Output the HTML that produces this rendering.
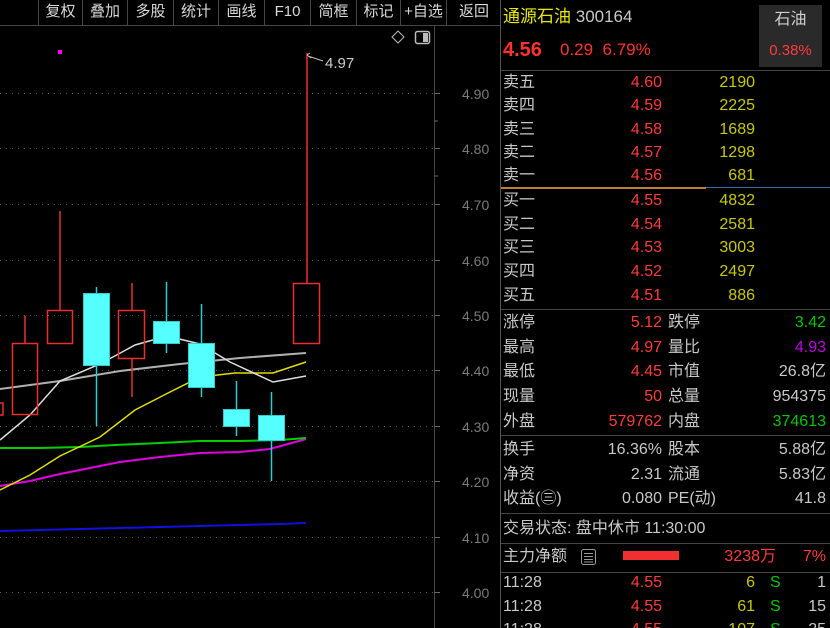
<!DOCTYPE html>
<html style="overflow:hidden;width:830px;height:628px"><head><meta charset="utf-8"><style>
html,body{overflow:hidden;}
body{margin:0;width:830px;height:628px;background:#000;overflow:hidden;position:relative;font-family:"Liberation Sans","Noto Sans CJK SC",sans-serif;}
.a{position:absolute;white-space:nowrap;line-height:20px;}
.tb{position:absolute;top:0;height:25px;line-height:24px;font-size:15px;color:#d8d8d8;text-align:center;border-left:1px solid #444;}
.l{color:#c8c8c8;font-size:16px;}
.r{color:#ff3a3a;font-size:16px;text-align:right;}
.y{color:#c8c800;font-size:16px;text-align:right;}
.w{color:#c8c8c8;font-size:16px;text-align:right;}
.g{color:#00c800;font-size:16px;text-align:right;}
.hl{position:absolute;left:501px;width:329px;height:1px;background:#444;}
.ax{position:absolute;left:462px;color:#7a7a7a;font-size:14px;line-height:16px;}
</style></head><body>
<div class="tb" style="left:38px;width:43px">复权</div>
<div class="tb" style="left:82px;width:44px">叠加</div>
<div class="tb" style="left:127px;width:45px">多股</div>
<div class="tb" style="left:173px;width:44px">统计</div>
<div class="tb" style="left:218px;width:45px">画线</div>
<div class="tb" style="left:264px;width:45px">F10</div>
<div class="tb" style="left:310px;width:45px">简框</div>
<div class="tb" style="left:356px;width:43px">标记</div>
<div class="tb" style="left:400px;width:45px">+自选</div>
<div class="tb" style="left:446px;width:54px">返回</div>
<div style="position:absolute;left:0;top:25px;width:500px;height:1px;background:#444"></div>
<svg style="position:absolute;left:0;top:0" width="500" height="628">
<g stroke="#555" stroke-dasharray="1,5" stroke-width="1">
<line x1="0" y1="93.5" x2="434" y2="93.5"/><line x1="0" y1="148.5" x2="434" y2="148.5"/><line x1="0" y1="204.5" x2="434" y2="204.5"/><line x1="0" y1="260.5" x2="434" y2="260.5"/><line x1="0" y1="315.5" x2="434" y2="315.5"/><line x1="0" y1="370.5" x2="434" y2="370.5"/><line x1="0" y1="426.5" x2="434" y2="426.5"/><line x1="0" y1="481.5" x2="434" y2="481.5"/><line x1="0" y1="537.5" x2="434" y2="537.5"/><line x1="0" y1="592.5" x2="434" y2="592.5"/>
</g>
<line x1="434.5" y1="26" x2="434.5" y2="628" stroke="#444"/>
<g stroke="#666"><line x1="434" y1="93.5" x2="440" y2="93.5"/><line x1="434" y1="121" x2="438" y2="121"/><line x1="434" y1="148.5" x2="440" y2="148.5"/><line x1="434" y1="176" x2="438" y2="176"/><line x1="434" y1="204.5" x2="440" y2="204.5"/><line x1="434" y1="260.5" x2="440" y2="260.5"/><line x1="434" y1="315.5" x2="440" y2="315.5"/><line x1="434" y1="370.5" x2="440" y2="370.5"/><line x1="434" y1="426.5" x2="440" y2="426.5"/><line x1="434" y1="481.5" x2="440" y2="481.5"/><line x1="434" y1="537.5" x2="440" y2="537.5"/><line x1="434" y1="592.5" x2="440" y2="592.5"/></g>
<path d="M398 31 L404 37 L398 43 L392 37 Z" fill="none" stroke="#bbb"/>
<rect x="415.5" y="31.5" width="14" height="12" rx="2" fill="none" stroke="#bbb" stroke-width="1.5"/><rect x="423" y="33" width="5" height="9" fill="#bbb"/>
<rect x="58" y="50" width="4" height="4" fill="#f0f"/>
<polyline points="0,531 40,530 80,529 120,528 160,527 200,526 240,525 280,524 306,523" fill="none" stroke="#1010e0" stroke-width="2"/>
<polyline points="0,486 30,481 60,474 90,468 120,462 160,457 200,453 240,452 270,449 306,439" fill="none" stroke="#e000e0" stroke-width="2"/>
<polyline points="0,448 40,448 80,447 115,445 160,443 200,441 240,441 280,440 306,438" fill="none" stroke="#00d000" stroke-width="2"/>
<polyline points="0,490 30,475 60,456 100,437 135,410 170,392 200,377 235,373 273,373 306,362" fill="none" stroke="#e0e000" stroke-width="1.5"/>
<polyline points="0,389 60,381 120,371 180,364 240,358 306,353" fill="none" stroke="#b0b0b0" stroke-width="2"/>
<polyline points="0,440 30,415 60,381 100,364 135,345 167,336 200,344 230,362 273,382 306,376" fill="none" stroke="#ddd" stroke-width="1.5"/>
<g fill="none" stroke="#e83030" stroke-width="1.5">
<rect x="-2" y="403" width="5" height="12"/>
<line x1="25" y1="316" x2="25" y2="343"/><rect x="12.5" y="343.5" width="25" height="71"/>
<line x1="60" y1="211" x2="60" y2="310"/><rect x="47.5" y="310.5" width="25" height="33"/>
<line x1="132" y1="283" x2="132" y2="310"/><line x1="132" y1="359" x2="132" y2="397"/><rect x="118.5" y="310.5" width="26" height="48"/>
<line x1="307" y1="53" x2="307" y2="283"/><rect x="293.5" y="283.5" width="26" height="60"/>
</g>
<g fill="#5ff" stroke="#3cc">
<line x1="96.5" y1="287" x2="96.5" y2="426" stroke-width="1.5"/><rect x="83.5" y="293.5" width="26" height="72"/>
<line x1="166.5" y1="282" x2="166.5" y2="353" stroke-width="1.5"/><rect x="153.5" y="321.5" width="26" height="22"/>
<line x1="201.5" y1="304" x2="201.5" y2="397" stroke-width="1.5"/><rect x="188.5" y="343.5" width="26" height="44"/>
<line x1="236.5" y1="381" x2="236.5" y2="436" stroke-width="1.5"/><rect x="223.5" y="409.5" width="26" height="17"/>
<line x1="271.5" y1="392" x2="271.5" y2="481" stroke-width="1.5"/><rect x="258.5" y="415.5" width="26" height="25"/>
</g>
<path d="M307 55 L310 53 M307 55 L311 58 M308 56 L323 61" stroke="#bbb" fill="none"/>
<text x="325" y="68" fill="#ccc" font-size="15" font-family="Liberation Sans">4.97</text>
</svg>
<div class="ax" style="top:86px">4.90</div><div class="ax" style="top:141px">4.80</div><div class="ax" style="top:197px">4.70</div><div class="ax" style="top:253px">4.60</div><div class="ax" style="top:308px">4.50</div><div class="ax" style="top:363px">4.40</div><div class="ax" style="top:419px">4.30</div><div class="ax" style="top:474px">4.20</div><div class="ax" style="top:530px">4.10</div><div class="ax" style="top:585px">4.00</div>
<div style="position:absolute;left:500px;top:0;width:1px;height:628px;background:#555"></div>
<div class="a" style="left:503px;top:7px;font-size:17px;color:#e8e800">通源石油 <span style="color:#c8c8c8">300164</span></div>
<div class="a" style="left:503px;top:40px;font-size:20px;font-weight:bold;color:#ff3232">4.56</div>
<div class="a" style="left:560px;top:40px;font-size:17px;color:#ff3232">0.29&nbsp;&nbsp;6.79%</div>
<div style="position:absolute;left:759px;top:5px;width:63px;height:62px;background:#2a2a2a"></div>
<div class="a" style="left:759px;top:10px;width:63px;text-align:center;font-size:16px;color:#d0d0d0">石油</div>
<div class="a" style="left:759px;top:41px;width:63px;text-align:center;font-size:15px;color:#ff3a3a">0.38%</div>
<div class="hl" style="top:70px"></div>
<div style="position:absolute;left:501px;top:187px;width:205px;height:2px;background:#c08030"></div>
<div style="position:absolute;left:706px;top:187px;width:124px;height:1px;background:#3070b0"></div>
<div class="hl" style="top:309px"></div><div class="hl" style="top:435px"></div><div class="hl" style="top:513px"></div><div class="hl" style="top:543px"></div><div class="hl" style="top:572px"></div>
<div class="a l" style="left:503px;top:73px">卖五</div><div class="a r" style="left:590px;width:72px;top:73px">4.60</div><div class="a y" style="left:680px;width:75px;top:73px">2190</div>
<div class="a l" style="left:503px;top:96px">卖四</div><div class="a r" style="left:590px;width:72px;top:96px">4.59</div><div class="a y" style="left:680px;width:75px;top:96px">2225</div>
<div class="a l" style="left:503px;top:120px">卖三</div><div class="a r" style="left:590px;width:72px;top:120px">4.58</div><div class="a y" style="left:680px;width:75px;top:120px">1689</div>
<div class="a l" style="left:503px;top:143px">卖二</div><div class="a r" style="left:590px;width:72px;top:143px">4.57</div><div class="a y" style="left:680px;width:75px;top:143px">1298</div>
<div class="a l" style="left:503px;top:166px">卖一</div><div class="a r" style="left:590px;width:72px;top:166px">4.56</div><div class="a y" style="left:680px;width:75px;top:166px">681</div>
<div class="a l" style="left:503px;top:191px">买一</div><div class="a r" style="left:590px;width:72px;top:191px">4.55</div><div class="a y" style="left:680px;width:75px;top:191px">4832</div>
<div class="a l" style="left:503px;top:215px">买二</div><div class="a r" style="left:590px;width:72px;top:215px">4.54</div><div class="a y" style="left:680px;width:75px;top:215px">2581</div>
<div class="a l" style="left:503px;top:238px">买三</div><div class="a r" style="left:590px;width:72px;top:238px">4.53</div><div class="a y" style="left:680px;width:75px;top:238px">3003</div>
<div class="a l" style="left:503px;top:262px">买四</div><div class="a r" style="left:590px;width:72px;top:262px">4.52</div><div class="a y" style="left:680px;width:75px;top:262px">2497</div>
<div class="a l" style="left:503px;top:286px">买五</div><div class="a r" style="left:590px;width:72px;top:286px">4.51</div><div class="a y" style="left:680px;width:75px;top:286px">886</div>
<div class="a l" style="left:503px;top:313px">涨停</div><div class="a r" style="left:580px;width:82px;top:313px">5.12</div><div class="a l" style="left:668px;top:313px">跌停</div><div class="a g" style="left:740px;width:86px;top:313px">3.42</div>
<div class="a l" style="left:503px;top:338px">最高</div><div class="a r" style="left:580px;width:82px;top:338px">4.97</div><div class="a l" style="left:668px;top:338px">量比</div><div class="a r" style="left:740px;width:86px;top:338px;color:#c000e0">4.93</div>
<div class="a l" style="left:503px;top:362px">最低</div><div class="a r" style="left:580px;width:82px;top:362px">4.45</div><div class="a l" style="left:668px;top:362px">市值</div><div class="a w" style="left:740px;width:86px;top:362px">26.8亿</div>
<div class="a l" style="left:503px;top:387px">现量</div><div class="a r" style="left:580px;width:82px;top:387px">50</div><div class="a l" style="left:668px;top:387px">总量</div><div class="a w" style="left:740px;width:86px;top:387px">954375</div>
<div class="a l" style="left:503px;top:412px">外盘</div><div class="a r" style="left:580px;width:82px;top:412px">579762</div><div class="a l" style="left:668px;top:412px">内盘</div><div class="a g" style="left:740px;width:86px;top:412px">374613</div>
<div class="a l" style="left:503px;top:440px">换手</div><div class="a w" style="left:580px;width:82px;top:440px">16.36%</div><div class="a l" style="left:668px;top:440px">股本</div><div class="a w" style="left:740px;width:86px;top:440px">5.88亿</div>
<div class="a l" style="left:503px;top:465px">净资</div><div class="a w" style="left:580px;width:82px;top:465px">2.31</div><div class="a l" style="left:668px;top:465px">流通</div><div class="a w" style="left:740px;width:86px;top:465px">5.83亿</div>
<div class="a l" style="left:503px;top:489px">收益(㊂)</div><div class="a w" style="left:580px;width:82px;top:489px">0.080</div><div class="a l" style="left:668px;top:489px">PE(动)</div><div class="a w" style="left:740px;width:86px;top:489px">41.8</div>
<div class="a l" style="left:503px;top:519px">交易状态: 盘中休市 11:30:00</div>
<div class="a l" style="left:503px;top:547px">主力净额</div>
<svg style="position:absolute;left:581px;top:549px" width="16" height="17"><rect x="0.5" y="0.5" width="14" height="15" rx="2" fill="none" stroke="#999"/><path d="M3 4.5H12M3 7.5H12M3 10.5H12M3 13H12" stroke="#999"/></svg>
<div style="position:absolute;left:623px;top:551px;width:56px;height:9px;background:#f03030"></div>
<div class="a r" style="left:680px;width:96px;top:547px">3238万</div><div class="a r" style="left:780px;width:46px;top:547px">7%</div>
<div class="a l" style="left:503px;top:573px">11:28</div><div class="a r" style="left:580px;width:82px;top:573px">4.55</div><div class="a y" style="left:680px;width:75px;top:573px">6</div><div class="a g" style="left:770px;top:573px">S</div><div class="a w" style="left:790px;width:36px;top:573px">1</div>
<div class="a l" style="left:503px;top:597px">11:28</div><div class="a r" style="left:580px;width:82px;top:597px">4.55</div><div class="a y" style="left:680px;width:75px;top:597px">61</div><div class="a g" style="left:770px;top:597px">S</div><div class="a w" style="left:790px;width:36px;top:597px">15</div>
<div style="position:absolute;left:501px;top:618px;width:329px;height:10px;overflow:hidden">
<div class="a l" style="left:2px;top:2px">11:28</div><div class="a r" style="left:79px;width:82px;top:2px">4.55</div><div class="a y" style="left:179px;width:75px;top:2px">107</div><div class="a g" style="left:269px;top:2px">S</div><div class="a w" style="left:289px;width:36px;top:2px">25</div>
</div>
</body></html>
